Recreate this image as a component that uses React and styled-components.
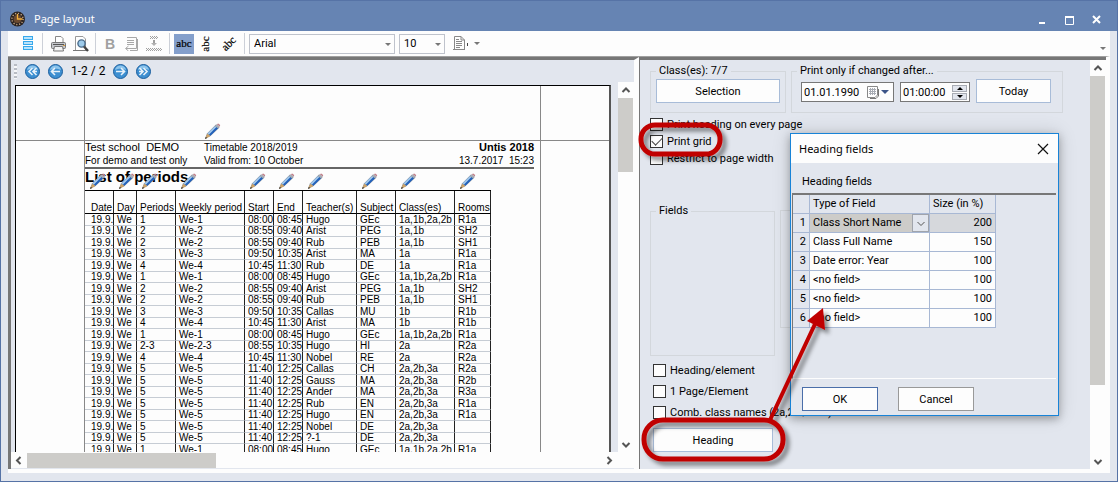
import React from "react";
import styled, { createGlobalStyle } from "styled-components";

const GlobalStyle = createGlobalStyle`
  * {
    box-sizing: border-box;
  }
  body {
    margin: 0;
    background: #fdfdfd;
    color: #000;
    font: 11px/16px Roboto, "Liberation Sans", sans-serif;
    overflow: hidden;
  }
  button, input, select {
    font: inherit;
    color: inherit;
    margin: 0;
    border-radius: 0;
  }
`;

const Window = styled.div`
  display: flex;
  flex-direction: column;
  height: calc(100vh - 1px);
  margin-right: 1px;
  border: 1px solid #5673a6;
  background: #e2e6ee;
`;

const TitleBar = styled.header`
  display: flex;
  align-items: center;
  flex: none;
  height: 30px;
  padding: 6px 11px 0 8px;
  gap: 8px;
  background: #6684b3;
  color: #fff;
`;

const WindowTitle = styled.h1`
  flex: 1;
  margin: 0;
  font: 11px/16px "Noto Sans", sans-serif;
`;

const WindowButton = styled.button`
  display: flex;
  width: 19px;
  height: 19px;
  padding: 3px;
  border: 0;
  background: none;
`;

const Content = styled.main`
  display: flex;
  flex-direction: column;
  flex: 1;
  min-height: 0;
  padding: 0 7px 8px;
`;

const Toolbar = styled.div`
  display: flex;
  align-items: center;
  flex: none;
  height: 25px;
  padding: 0 4px 0 9px;
  background: #fdfdfd;
`;

const ToolButton = styled.button`
  display: flex;
  align-items: center;
  justify-content: center;
  flex: none;
  width: ${(p) => p.$width || 22}px;
  height: 20px;
  padding: 0;
  border: 0;
  background: ${(p) => (p.$active ? "#849fcb" : "none")};
`;

const Divider = styled.span`
  width: 1px;
  height: 21px;
  margin: 0 4px 0 3px;
  background: #ccd0d8;
`;

const Spacer = styled.span`
  flex: 1;
`;

const Overflow = styled.span`
  display: flex;
  align-self: flex-end;
  padding-bottom: 6px;
`;

const SelectBox = styled.span`
  position: relative;
  width: ${(p) => p.$width}px;
  margin-right: 4px;

  svg {
    position: absolute;
    right: 4px;
    top: 9px;
    pointer-events: none;
  }
`;

const Select = styled.select`
  display: block;
  appearance: none;
  width: 100%;
  height: 20px;
  padding: 0 4px;
  border: 1px solid #bfc3cc;
  background: #fdfdfd;
  line-height: 16px;
`;

const Panels = styled.div`
  display: flex;
  flex: 1;
  min-height: 0;
  border: solid #fdfdfd;
  border-width: 1px 4px 4px 0;
  border-top-color: #a0a0a0;
`;

const Preview = styled.section`
  display: flex;
  flex-direction: column;
  flex: 1;
  min-width: 0;
  padding-bottom: 1px;
  border-top: 3px solid #777;
  border-left: 3px solid #777;
  border-right: 5px solid #fdfdfd;
`;

const Pager = styled.nav`
  display: flex;
  align-items: center;
  flex: none;
  height: 22px;
  padding-left: 3px;
  gap: 8px;
`;

const Grip = styled.span`
  width: 3px;
  height: 15px;
  background: repeating-linear-gradient(#b8bcc4 0 2px, #f6f7f9 2px 4px);
`;

const PageButton = styled.button`
  width: 15px;
  height: 15px;
  padding: 0;
  border: 0;
  background: none;

  svg {
    display: block;
  }
`;

const PageCount = styled.span`
  font-size: 12px;
`;

const PreviewBody = styled.div`
  display: flex;
  flex: 1;
  min-height: 0;
`;

const Viewport = styled.div`
  flex: 1;
  overflow: hidden;
  padding: 3px 7px 0 4px;
`;

const Sheet = styled.div`
  display: grid;
  grid-template-columns: 68px 1fr 68px;
  grid-template-rows: 55px 400px;
  border: solid #000;
  border-width: 1px 0 0 1px;
  border-right: 2px solid #555;
  background: #fdfdfd;
  font: 10px/12px "Liberation Sans", sans-serif;
`;

const Margin = styled.div`
  display: flex;
  align-items: flex-end;
  padding-left: ${(p) => (p.$center ? 119 : 0)}px;
  border: solid #888;
  border-width: 0 ${(p) => (p.$center ? 1 : 0)}px ${(p) => (p.$top ? 1 : 0)}px
    ${(p) => (p.$center ? 1 : 0)}px;
`;

const Printed = styled.div`
  border: solid #888;
  border-width: 0 1px;
`;

const PageHeader = styled.header`
  display: grid;
  grid-template-columns: 119px 1fr auto;
  margin-right: 6px;
  border-bottom: 2px solid #666;
  line-height: 13px;
`;

const SchoolName = styled.span`
  font-size: 11px;
  white-space: pre;
`;

const Stamp = styled.span`
  text-align: right;
  white-space: pre;
  font-weight: ${(p) => (p.$bold ? "bold" : "normal")};
  font-size: ${(p) => (p.$bold ? 11 : 10)}px;
`;

const ReportTitle = styled.h2`
  margin: 0;
  height: 21px;
  font: bold 15px/15px "Liberation Sans", sans-serif;
`;

const PeriodTable = styled.table`
  table-layout: fixed;
  width: 406px;
  border-collapse: separate;
  border-spacing: 0;
  border-top: 1px solid #000;

  th,
  td {
    position: relative;
    padding: 0 0 0 3px;
    border-right: 1px solid #222;
    font-weight: normal;
    text-align: left;
    white-space: nowrap;
  }
  th {
    height: 23px;
    border-bottom: 1px solid #000;
    vertical-align: bottom;
    line-height: 11px;
  }
  td {
    height: 12px;
    border-bottom: 1px solid #c6ccd4;
    line-height: 10px;
  }
  tr:nth-child(even) td {
    height: 11px;
  }
  th:first-child,
  td:first-child {
    padding-left: 6px;
  }
`;

const PencilMark = styled.span`
  position: absolute;
  left: 4px;
  top: -18px;
`;

const VerticalScroll = styled.div`
  display: flex;
  flex-direction: column;
  align-items: center;
  justify-content: space-between;
  flex: none;
  width: 16px;
  background: #fdfdfd;
`;

const HorizontalScroll = styled.div`
  display: flex;
  align-items: center;
  flex: none;
  height: 16px;
  padding-right: 17px;
  background: #fdfdfd;
`;

const Arrow = styled.button`
  display: flex;
  align-items: center;
  justify-content: center;
  flex: none;
  width: 16px;
  height: 16px;
  padding: 0;
  border: 0;
  background: none;
`;

const Track = styled.div`
  flex: 1;
  width: 100%;
`;

const Thumb = styled.div`
  width: ${(p) => p.$width || "15px"};
  height: ${(p) => p.$height || "15px"};
  background: #cdccc9;
`;

const Options = styled.section`
  position: relative;
  display: flex;
  flex: none;
  width: 467px;
  border-top: 3px solid #777;
  border-left: 1px solid #777;
`;

const OptionsBody = styled.div`
  flex: 1;
  min-width: 0;
  padding: 3px 0 0 10px;
`;

const GroupRow = styled.div`
  display: flex;
  align-items: flex-start;
  gap: 5px;
  margin-top: ${(p) => p.$top || 0}px;
`;

const Group = styled.fieldset`
  display: flex;
  gap: 6px;
  flex: none;
  min-width: 0;
  width: ${(p) => p.$width}px;
  height: ${(p) => p.$height}px;
  margin: 0;
  padding: 0 ${(p) => p.$inset || 5}px;
  border: 1px solid #d3d7dc;

  legend {
    margin-left: ${(p) => 5 - (p.$inset || 5)}px;
    padding: 0 3px;
    white-space: nowrap;
  }
`;

const EmptyGroup = styled(Group)`
  margin-top: 7px;
`;

const PushButton = styled.button`
  width: ${(p) => p.$width}px;
  height: 24px;
  padding: 1px 0 0;
  border: 1px solid ${(p) => p.$border || "#a8bcd8"};
  background: #fdfdfd;
  text-align: center;
`;

const Field = styled.label`
  display: flex;
  align-items: center;
  width: ${(p) => p.$width}px;
  height: 20px;
  margin-top: 3px;
  padding-left: 2px;
  border: 1px solid #777;
  background: #fdfdfd;

  input {
    flex: 1;
    min-width: 0;
    padding: 2px 0 0;
    border: 0;
    background: none;
  }
`;

const Spinner = styled.span`
  display: grid;
  gap: 1px;
  width: 15px;
  margin-right: 2px;

  button {
    display: flex;
    align-items: center;
    justify-content: center;
    height: 7px;
    padding: 0;
    border: 1px solid #a8acb4;
    background: #e2e6ee;
  }
`;

const CheckList = styled.div`
  display: grid;
  grid-auto-rows: ${(p) => p.$row}px;
  margin: ${(p) => p.$margin};
`;

const Check = styled.label`
  display: flex;
  align-items: center;
  gap: 4px;
  white-space: nowrap;

  input {
    appearance: none;
    flex: none;
    width: 13px;
    height: 13px;
    border: 1px solid #333;
    background: #fdfdfd;
  }
  input:checked::after {
    content: "";
    display: block;
    width: 9px;
    height: 5px;
    margin: 1px;
    border: solid #444;
    border-width: 0 0 1px 1px;
    transform: rotate(-45deg);
  }
`;

const Dialog = styled.section`
  position: absolute;
  left: 150px;
  top: 73px;
  width: 269px;
  border: 1px solid #1883d7;
  background: #e2e6ee;
  box-shadow: 0 3px 8px rgba(0, 0, 0, 0.28), 0 0 18px rgba(0, 0, 0, 0.14);
`;

const DialogTitle = styled.header`
  display: flex;
  align-items: center;
  justify-content: space-between;
  height: 29px;
  padding: 0 8px;
  background: #fdfdfd;

  h2 {
    margin: 0;
    font: 11px/16px "Noto Sans", sans-serif;
  }
  button {
    display: flex;
    padding: 0;
    border: 0;
    background: none;
  }
`;

const DialogLabel = styled.p`
  margin: 0;
  padding: 11px 11px 3px;
`;

const GridFrame = styled.div`
  height: 186px;
  margin: 0 2px 0 1px;
  border: solid #777;
  border-width: 2px 0 0 1px;
  border-bottom: 1px solid #fdfdfd;
`;

const FieldTable = styled.table`
  table-layout: fixed;
  width: 203px;
  border-collapse: separate;
  border-spacing: 0;

  th,
  td {
    height: 19px;
    padding: 0 3px;
    border: solid #a8b8d4;
    border-width: 0 1px 1px 0;
    background: #fdfdfd;
    font-weight: normal;
    text-align: left;
    line-height: 18px;
    white-space: nowrap;
  }
  th {
    background: #e2e6ee;
  }
  tbody th {
    text-align: right;
  }
  td:last-child {
    text-align: right;
  }
  tbody tr:first-child td {
    background: #d6d8dc;
  }
  tbody tr:first-child td:nth-child(2) {
    background: #cdccc9;
  }
`;

const TypeCell = styled.div`
  display: flex;
  justify-content: space-between;
  height: 18px;
  margin-right: -3px;

  button {
    display: flex;
    align-items: center;
    justify-content: center;
    width: 17px;
    padding: 0;
    border: 1px solid #a0a4ac;
    background: #e2e6ee;
  }
`;

const DialogButtons = styled.footer`
  display: flex;
  gap: 20px;
  padding: 8px 11px 4px;
`;

const Callouts = styled.svg`
  position: absolute;
  left: -2px;
  top: 60px;
  overflow: visible;
  pointer-events: none;
`;

const periods = [
  "1|We-1|08:00|08:45|Hugo|GEc|1a,1b,2a,2b|R1a",
  "2|We-2|08:55|09:40|Arist|PEG|1a,1b|SH2",
  "2|We-2|08:55|09:40|Rub|PEB|1a,1b|SH1",
  "3|We-3|09:50|10:35|Arist|MA|1a|R1a",
  "4|We-4|10:45|11:30|Rub|DE|1a|R1a",
  "1|We-1|08:00|08:45|Hugo|GEc|1a,1b,2a,2b|R1a",
  "2|We-2|08:55|09:40|Arist|PEG|1a,1b|SH2",
  "2|We-2|08:55|09:40|Rub|PEB|1a,1b|SH1",
  "3|We-3|09:50|10:35|Callas|MU|1b|R1b",
  "4|We-4|10:45|11:30|Arist|MA|1b|R1b",
  "1|We-1|08:00|08:45|Hugo|GEc|1a,1b,2a,2b|R1a",
  "2-3|We-2-3|08:55|10:35|Hugo|HI|2a|R2a",
  "4|We-4|10:45|11:30|Nobel|RE|2a|R2a",
  "5|We-5|11:40|12:25|Callas|CH|2a,2b,3a|R2a",
  "5|We-5|11:40|12:25|Gauss|MA|2a,2b,3a|R2b",
  "5|We-5|11:40|12:25|Ander|MA|2a,2b,3a|R3a",
  "5|We-5|11:40|12:25|Rub|EN|2a,2b,3a|R1a",
  "5|We-5|11:40|12:25|Hugo|EN|2a,2b,3a|R1a",
  "5|We-5|11:40|12:25|Nobel|DE|2a,2b,3a|",
  "5|We-5|11:40|12:25|?-1|DE|2a,2b,3a|",
  "1|We-1|08:00|08:45|Hugo|GEc|1a,1b,2a,2b|R1a",
].map((line) => ["19.9.", "We", ...line.split("|")]);

const columns = [
  ["Date", 29],
  ["Day", 23],
  ["Periods", 39],
  ["Weekly period", 69],
  ["Start", 29],
  ["End", 29],
  ["Teacher(s)", 54],
  ["Subject", 39],
  ["Class(es)", 59],
  ["Rooms", 36],
];

const headingFields = [
  ["Class Short Name", 200],
  ["Class Full Name", 150],
  ["Date error: Year", 100],
  ["<no field>", 100],
  ["<no field>", 100],
  ["<no field>", 100],
];

const Pencil = () => (
  <svg width="17" height="17" viewBox="0 0 17 17">
    <path d="M1 16 L3 10.5 L12 1.5 L15.5 4.5 L6.5 13 Z" fill="#7d8794" />
    <path d="M3.4 10.6 L11 3 L12.6 4 L5 11.8 Z" fill="#9cc6ee" />
    <path d="M5 11.8 L12.6 4 L14 5.2 L6.4 12.8 Z" fill="#1f62c0" />
    <path d="M1 16 L3.2 10.8 L6.4 13 Z" fill="#cfa468" />
    <path d="M1 16 L1.8 13.8 L3.2 15 Z" fill="#333" />
    <path d="M11 3 L12.6 1.2 L15.8 3.6 L14 5.2 Z" fill="#a8adb5" />
    <path d="M12.8 1.2 L14.2 0.6 L16.2 2 L15.8 3.6 Z" fill="#bf7f88" />
  </svg>
);

const Caret = ({ color = "#777" }) => (
  <svg width="6" height="3" viewBox="0 0 6 3">
    <path d="M0 0H6L3 3Z" fill={color} />
  </svg>
);

const chevrons = {
  up: "M1.5 6 L5 2.5 L8.5 6",
  down: "M1.5 3 L5 6.5 L8.5 3",
  left: "M6.5 1 L3 4.5 L6.5 8",
  right: "M3.5 1 L7 4.5 L3.5 8",
};

const Chevron = ({ to, width = 2 }) => (
  <svg width="10" height="9" viewBox="0 0 10 9">
    <path d={chevrons[to]} fill="none" stroke="#555" strokeWidth={width} />
  </svg>
);

const arrows = {
  first: "M7.5 4 L4 7.5 L7.5 11 M11.5 4 L8 7.5 L11.5 11 M8 7.5H12",
  previous: "M7 4 L3.5 7.5 L7 11 M4 7.5H12",
  next: "M8 4 L11.5 7.5 L8 11 M11 7.5H3",
  last: "M7.5 4 L11 7.5 L7.5 11 M3.5 4 L7 7.5 L3.5 11 M3 7.5H7",
};

const Page = ({ to }) => (
  <PageButton aria-label={to}>
    <svg width="15" height="15" viewBox="0 0 15 15">
      <circle cx="7.5" cy="7.5" r="7" fill="#3d8fd1" stroke="#1c5f9e" />
      <path d="M2 6 A5.6 5.6 0 0 1 13 6 Q7.5 3 2 6Z" fill="#8cc4ec" />
      <path d={arrows[to]} fill="none" stroke="#e8f2fa" strokeWidth="1.6" />
    </svg>
  </PageButton>
);

const Logo = () => (
  <svg width="17" height="17" viewBox="0 0 17 17">
    <circle cx="8.5" cy="8" r="7.5" fill="#2a2320" />
    <circle
      cx="8.5"
      cy="8"
      r="5.6"
      fill="none"
      stroke="#c8a888"
      strokeWidth="1.4"
      strokeDasharray="1.2 1.7"
    />
    <circle cx="8.5" cy="8" r="4" fill="#6b4a30" />
    <path d="M8.5 3V8H13.5" fill="none" stroke="#f4b13c" strokeWidth="1.3" />
  </svg>
);

const LinesIcon = () => (
  <svg width="11" height="15" viewBox="0 0 11 15">
    {[0, 5, 10].map((y) => (
      <rect
        key={y}
        x="0.5"
        y={y + 0.5}
        width="9"
        height="3"
        fill="#b9e3fb"
        stroke="#38a9ec"
      />
    ))}
  </svg>
);

const PrinterIcon = () => (
  <svg width="16" height="16" viewBox="0 0 16 16">
    <path d="M4.5 7V0.5H10L12 2.5V7" fill="#fff" stroke="#888" />
    <rect x="0.5" y="6.5" width="14" height="6" rx="1" fill="#c4c6ca" stroke="#777" />
    <path d="M2 8.5H13" stroke="#555" />
    <path d="M3.5 10.5H11.5L12.5 15H2.5Z" fill="#f4f4f4" stroke="#777" />
    <path d="M12 9.5H14" stroke="#d49a40" />
  </svg>
);

const PreviewIcon = () => (
  <svg width="16" height="16" viewBox="0 0 16 16">
    <path d="M2.5 0.5H10L12.5 3V14.5H2.5Z" fill="#fff" stroke="#999" />
    <path d="M0 14.5H15" stroke="#777" />
    <circle cx="8.5" cy="7.5" r="3.6" fill="#9ecbea" stroke="#4a6c8c" strokeWidth="1.4" />
    <path d="M11 10.5L15 15" stroke="#444" strokeWidth="2.4" />
  </svg>
);

const CopyTextIcon = () => (
  <svg width="15" height="15" viewBox="0 0 15 15" fill="none" stroke="#a8a8a8">
    <path d="M3 1.5H12.5V12.5H4M3 4.5H10M3 6.5H10M3 8.5H10" />
    <path d="M4.5 10L1.5 12.5L4.5 15M2 12.5H9M13.5 3V14.5H6" />
  </svg>
);

const InsertIcon = () => (
  <svg width="16" height="15" viewBox="0 0 16 15" fill="none" stroke="#a0a0a0">
    <path d="M4 0.5H12M5 1.5H12M4 2.5H12" strokeDasharray="1 1" />
    <path d="M8 4V9" strokeWidth="2" />
    <path d="M5 7H11L8 10Z" fill="#b0b0b0" stroke="none" />
    <path d="M0 12.5H16M1 13.5H16M0 14.5H16" strokeDasharray="1 1" />
  </svg>
);

const TextIcon = ({ angle }) => (
  <svg width="20" height="20" viewBox="0 0 20 20">
    <text
      x="10"
      y="13"
      textAnchor="middle"
      fontFamily="Liberation Serif"
      fontSize="11"
      transform={`rotate(${angle} 10 10)`}
      stroke="#000"
      strokeWidth="0.2"
    >
      abc
    </text>
  </svg>
);

const DocumentIcon = () => (
  <svg width="16" height="15" viewBox="0 0 16 15" fill="none" stroke="#888">
    <path d="M1.5 13.5V0.5H8L11.5 4V13.5M8 0.5V4H11.5M0 13.5H12" />
    <path d="M3 3.5H6M3 5.5H9M3 7.5H9M3 9.5H9M3 11.5H7" />
    <path d="M14.5 7V10" stroke="#444" />
  </svg>
);

const CalendarIcon = () => (
  <svg width="12" height="13" viewBox="0 0 12 13">
    <path d="M0.5 0.5H10.5V9L8 11.5H0.5Z" fill="#fff" stroke="#888" />
    <path
      d="M2 3.5H9M2 5.5H9M2 7.5H9M3.5 2V9M5.5 2V9M7.5 2V9"
      stroke="#a8acb4"
    />
    <path d="M3 12.5H9L11.5 10V3" fill="none" stroke="#777" />
  </svg>
);

const PrintedPage = () => (
  <Sheet>
    <Margin $top />
    <Margin $top $center>
      <Pencil />
    </Margin>
    <Margin $top />
    <Margin />
    <Printed>
      <PageHeader>
        <SchoolName>Test school  DEMO</SchoolName>
        <span>Timetable 2018/2019</span>
        <Stamp $bold>Untis 2018</Stamp>
        <span>For demo and test only</span>
        <span>Valid from: 10 October</span>
        <Stamp>13.7.2017  15:23</Stamp>
      </PageHeader>
      <ReportTitle>List of periods</ReportTitle>
      <PeriodTable>
        <colgroup>
          {columns.map(([name, width]) => (
            <col key={name} width={width} />
          ))}
        </colgroup>
        <thead>
          <tr>
            {columns.map(([name]) => (
              <th key={name}>
                {name}
                <PencilMark>
                  <Pencil />
                </PencilMark>
              </th>
            ))}
          </tr>
        </thead>
        <tbody>
          {periods.map((row, i) => (
            <tr key={i}>
              {row.map((value, j) => (
                <td key={j}>{value}</td>
              ))}
            </tr>
          ))}
        </tbody>
      </PeriodTable>
    </Printed>
    <Margin />
  </Sheet>
);

const HeadingDialog = () => (
  <Dialog role="dialog" aria-label="Heading fields">
    <DialogTitle>
      <h2>Heading fields</h2>
      <button aria-label="Close dialog">
        <svg width="13" height="12" viewBox="0 0 13 12">
          <path d="M1 1L11 11M11 1L1 11" stroke="#111" strokeWidth="1.2" />
        </svg>
      </button>
    </DialogTitle>
    <DialogLabel>Heading fields</DialogLabel>
    <GridFrame>
      <FieldTable>
        <colgroup>
          <col width="17" />
          <col width="120" />
          <col width="66" />
        </colgroup>
        <thead>
          <tr>
            <th></th>
            <th>Type of Field</th>
            <th>Size (in %)</th>
          </tr>
        </thead>
        <tbody>
          {headingFields.map(([type, size], i) => (
            <tr key={i}>
              <th>{i + 1}</th>
              <td>
                <TypeCell>
                  {type}
                  {i === 0 && (
                    <button aria-label="Choose field">
                      <Chevron to="down" width={1} />
                    </button>
                  )}
                </TypeCell>
              </td>
              <td>{size}</td>
            </tr>
          ))}
        </tbody>
      </FieldTable>
    </GridFrame>
    <DialogButtons>
      <PushButton $width={76} $border="#4a6ea9">
        OK
      </PushButton>
      <PushButton $width={76} $border="#999">
        Cancel
      </PushButton>
    </DialogButtons>
  </Dialog>
);

const Annotations = () => (
  <Callouts width="190" height="345" viewBox="0 0 190 345">
    <defs>
      <filter id="shade" x="-20%" y="-20%" width="150%" height="150%">
        <feDropShadow dx="4" dy="4" stdDeviation="2" floodOpacity="0.45" />
      </filter>
    </defs>
    <g filter="url(#shade)" fill="none" stroke="#c00000" strokeWidth="5">
      <rect x="3" y="5" width="79" height="29" rx="14" />
      <rect x="6" y="300" width="139" height="39" rx="19" />
      <path d="M132 300L177 204" strokeWidth="4" />
      <path d="M185 188L169 201L187 210Z" fill="#c00000" stroke="none" />
    </g>
  </Callouts>
);

const App = () => {
  return (
    <>
      <GlobalStyle />
      <Window>
        <TitleBar>
          <Logo />
          <WindowTitle>Page layout</WindowTitle>
          <WindowButton aria-label="Minimize">
            <svg width="13" height="13">
              <path d="M3 10H9" stroke="#fff" strokeWidth="2" />
            </svg>
          </WindowButton>
          <WindowButton aria-label="Maximize">
            <svg width="13" height="13">
              <path d="M2.5 3.5H10.5V11.5H2.5Z" fill="none" stroke="#fff" />
              <path d="M2 4H11" stroke="#fff" strokeWidth="2" />
            </svg>
          </WindowButton>
          <WindowButton aria-label="Close">
            <svg width="13" height="13">
              <path d="M3 3L10 10M10 3L3 10" stroke="#fff" strokeWidth="2" />
            </svg>
          </WindowButton>
        </TitleBar>
        <Content>
          <Toolbar>
            <ToolButton aria-label="Lines">
              <LinesIcon />
            </ToolButton>
            <Divider />
            <ToolButton $width={23} aria-label="Print">
              <PrinterIcon />
            </ToolButton>
            <ToolButton aria-label="Print preview">
              <PreviewIcon />
            </ToolButton>
            <Divider />
            <ToolButton $width={20} aria-label="Bold">
              <svg width="12" height="14">
                <text
                  x="1"
                  y="12"
                  fontFamily="Liberation Sans"
                  fontSize="14"
                  fontWeight="bold"
                  fill="#a0a0a0"
                >
                  B
                </text>
              </svg>
            </ToolButton>
            <ToolButton aria-label="Copy text">
              <CopyTextIcon />
            </ToolButton>
            <ToolButton $width={24} aria-label="Insert">
              <InsertIcon />
            </ToolButton>
            <Divider />
            <ToolButton $active $width={20} aria-label="Horizontal text">
              <TextIcon angle={0} />
            </ToolButton>
            <ToolButton $width={23} aria-label="Vertical text">
              <TextIcon angle={-90} />
            </ToolButton>
            <ToolButton $width={24} aria-label="Slanted text">
              <TextIcon angle={-45} />
            </ToolButton>
            <Divider />
            <SelectBox $width={146}>
              <Select aria-label="Font">
                <option>Arial</option>
              </Select>
              <Caret />
            </SelectBox>
            <SelectBox $width={46}>
              <Select aria-label="Font size">
                <option>10</option>
              </Select>
              <Caret />
            </SelectBox>
            <ToolButton $width={34} aria-label="Page setup">
              <DocumentIcon />
              <svg width="11" height="3">
                <path d="M5 0H11L8 3Z" fill="#777" />
              </svg>
            </ToolButton>
            <Spacer />
            <Overflow>
              <Caret />
            </Overflow>
          </Toolbar>
          <Panels>
            <Preview>
              <Pager>
                <Grip />
                <Page to="first" />
                <Page to="previous" />
                <PageCount>1-2 / 2</PageCount>
                <Page to="next" />
                <Page to="last" />
              </Pager>
              <PreviewBody>
                <Viewport>
                  <PrintedPage />
                </Viewport>
                <VerticalScroll>
                  <Arrow aria-label="Scroll up">
                    <Chevron to="up" />
                  </Arrow>
                  <Track>
                    <Thumb $height="22%" />
                  </Track>
                  <Arrow aria-label="Scroll down">
                    <Chevron to="down" />
                  </Arrow>
                </VerticalScroll>
              </PreviewBody>
              <HorizontalScroll>
                <Arrow aria-label="Scroll left">
                  <Chevron to="left" />
                </Arrow>
                <Track>
                  <Thumb $width="33%" />
                </Track>
                <Arrow aria-label="Scroll right">
                  <Chevron to="right" />
                </Arrow>
              </HorizontalScroll>
            </Preview>
            <Options>
              <OptionsBody>
                <GroupRow>
                  <Group $width={136} $height={50}>
                    <legend>Class(es): 7/7</legend>
                    <PushButton $width={124}>Selection</PushButton>
                  </Group>
                  <Group $width={272} $height={50} $inset={9}>
                    <legend>Print only if changed after...</legend>
                    <Field $width={93}>
                      <input aria-label="Date" defaultValue="01.01.1990" />
                      <CalendarIcon />
                      <svg width="14" height="6">
                        <path d="M2 1H10L6 5Z" fill="#3c5488" />
                      </svg>
                    </Field>
                    <Field $width={70}>
                      <input aria-label="Time" defaultValue="01:00:00" />
                      <Spinner>
                        <button aria-label="Later">
                          <svg width="6" height="3">
                            <path d="M0 3H6L3 0Z" />
                          </svg>
                        </button>
                        <button aria-label="Earlier">
                          <Caret color="#000" />
                        </button>
                      </Spinner>
                    </Field>
                    <PushButton $width={75}>Today</PushButton>
                  </Group>
                </GroupRow>
                <CheckList $row={17} $margin="3px 0 0">
                  <Check>
                    <input type="checkbox" />
                    Print heading on every page
                  </Check>
                  <Check>
                    <input type="checkbox" defaultChecked />
                    Print grid
                  </Check>
                  <Check>
                    <input type="checkbox" />
                    Restrict to page width
                  </Check>
                </CheckList>
                <GroupRow $top={36}>
                  <Group $width={125} $height={153}>
                    <legend>Fields</legend>
                  </Group>
                  <EmptyGroup $width={200} $height={118} />
                </GroupRow>
                <CheckList $row={21} $margin="4px 0 0 3px">
                  <Check>
                    <input type="checkbox" />
                    Heading/element
                  </Check>
                  <Check>
                    <input type="checkbox" />1 Page/Element
                  </Check>
                  <Check>
                    <input type="checkbox" />
                    Comb. class names (2a,2b / 2ab)
                  </Check>
                </CheckList>
                <CheckList $row={24} $margin="5px 0 0 3px">
                  <PushButton $width={120}>Heading</PushButton>
                </CheckList>
              </OptionsBody>
              <VerticalScroll>
                <Arrow aria-label="Scroll up">
                  <Chevron to="up" />
                </Arrow>
                <Track>
                  <Thumb $height="82%" />
                </Track>
                <Arrow aria-label="Scroll down">
                  <Chevron to="down" />
                </Arrow>
              </VerticalScroll>
              <HeadingDialog />
              <Annotations />
            </Options>
          </Panels>
        </Content>
      </Window>
    </>
  );
};

export default App;
